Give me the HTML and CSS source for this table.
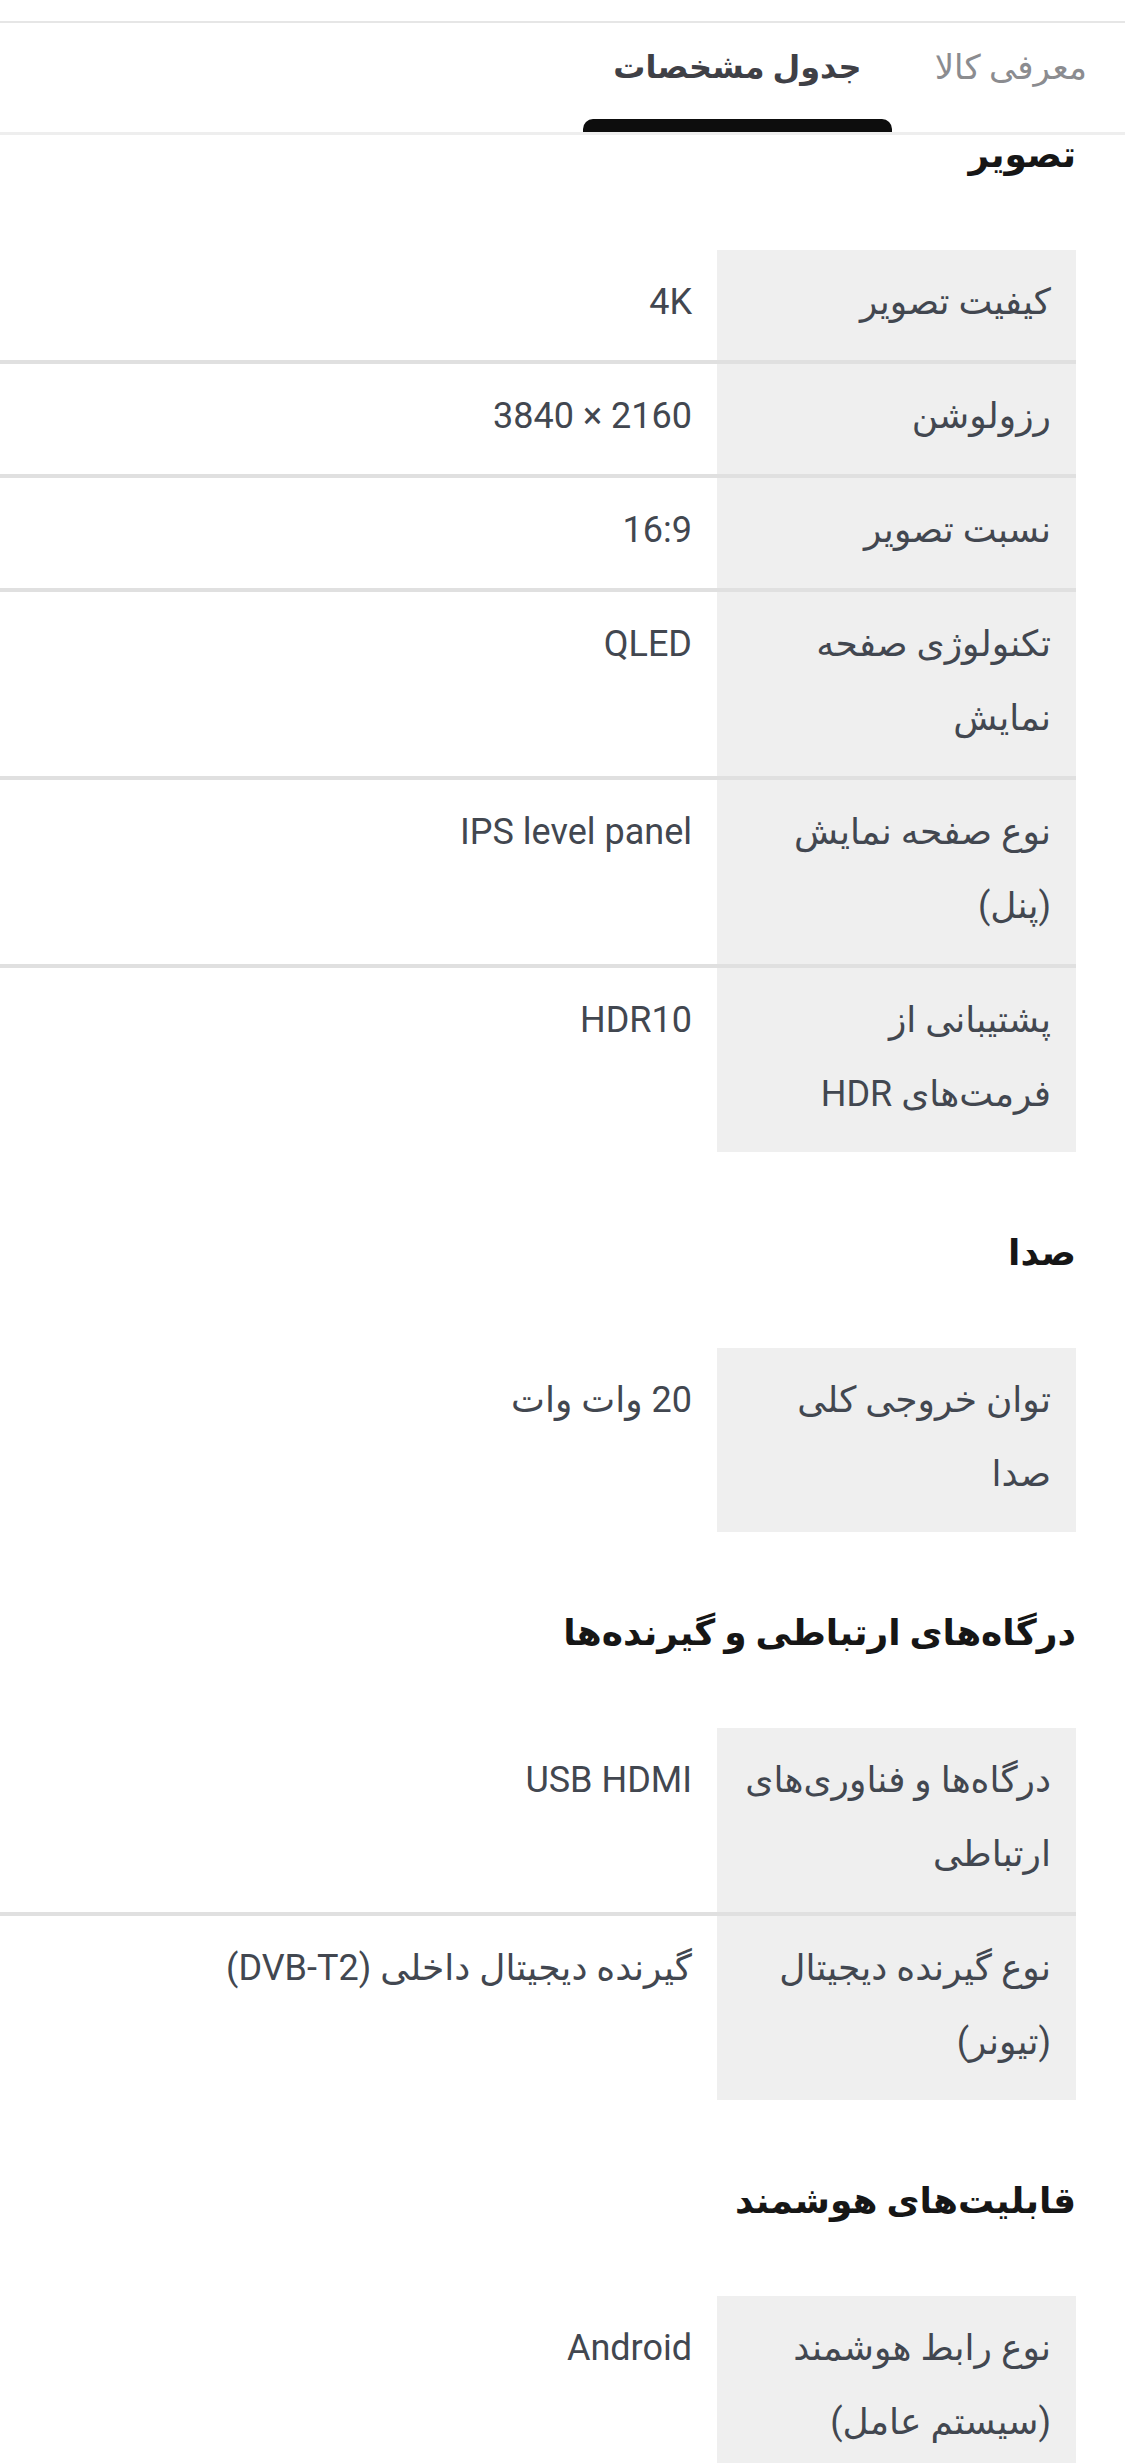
FILE: index.html
```html
<!DOCTYPE html>
<html lang="fa" dir="rtl">
<head>
<meta charset="utf-8">
<title>جدول مشخصات</title>
<link rel="stylesheet" href="styles.css">
</head>
<body>
<div class="page">
  <div class="top-rule"></div>
  <nav class="tabs">
    <div class="tab">معرفی کالا</div>
    <div class="tab tab-active">جدول مشخصات<span class="tab-indicator"></span></div>
  </nav>

  <section class="spec">
    <h2 class="spec-title">تصویر</h2>
    <div class="spec-table">
      <div class="spec-row"><div class="spec-label">کیفیت تصویر</div><div class="spec-value">4K</div></div>
      <div class="spec-row"><div class="spec-label">رزولوشن</div><div class="spec-value"><span class="ltr">3840 × 2160</span></div></div>
      <div class="spec-row"><div class="spec-label">نسبت تصویر</div><div class="spec-value">16:9</div></div>
      <div class="spec-row"><div class="spec-label">تکنولوژی صفحه نمایش</div><div class="spec-value">QLED</div></div>
      <div class="spec-row"><div class="spec-label">نوع صفحه نمایش (پنل)</div><div class="spec-value">IPS level panel</div></div>
      <div class="spec-row"><div class="spec-label">پشتیبانی از فرمت‌های HDR</div><div class="spec-value">HDR10</div></div>
    </div>
  </section>

  <section class="spec">
    <h2 class="spec-title">صدا</h2>
    <div class="spec-table">
      <div class="spec-row"><div class="spec-label">توان خروجی کلی صدا</div><div class="spec-value">20 وات وات</div></div>
    </div>
  </section>

  <section class="spec">
    <h2 class="spec-title">درگاه‌های ارتباطی و گیرنده‌ها</h2>
    <div class="spec-table">
      <div class="spec-row"><div class="spec-label">درگاه‌ها و فناوری‌های ارتباطی</div><div class="spec-value">USB HDMI</div></div>
      <div class="spec-row"><div class="spec-label">نوع گیرنده دیجیتال (تیونر)</div><div class="spec-value">گیرنده دیجیتال داخلی (DVB-T2)</div></div>
    </div>
  </section>

  <section class="spec">
    <h2 class="spec-title">قابلیت‌های هوشمند</h2>
    <div class="spec-table">
      <div class="spec-row"><div class="spec-label">نوع رابط هوشمند (سیستم عامل)</div><div class="spec-value">Android</div></div>
    </div>
  </section>
</div>
</body>
</html>
```

FILE: styles.css
```css
html, body {
  margin: 0;
  padding: 0;
  background: #ffffff;
}

body {
  direction: rtl;
  font-family: Roboto, "DejaVu Sans", sans-serif;
  overflow-x: hidden;
}

.page {
  width: 1125px;
}

.top-rule {
  height: 21px;
  border-bottom: 2px solid #e6e6e6;
}

.tabs {
  display: flex;
  gap: 12px;
  padding-right: 7px;
  height: 109px;
  border-bottom: 3px solid #eeeeee;
}

.tab {
  position: relative;
  padding: 19px 31px 0;
  font-size: 34px;
  line-height: 50px;
  color: #8b8c90;
  white-space: nowrap;
}

.tab-active {
  padding-left: 30px;
  padding-right: 30px;
  font-size: 32px;
  color: #3f4046;
  font-weight: bold;
}

.tab-indicator {
  position: absolute;
  left: 0;
  right: 0;
  bottom: 0;
  height: 13px;
  background: #0d0d0d;
  border-radius: 10px 10px 0 0;
}

.spec + .spec {
  margin-top: 76px;
}

.spec-title {
  margin: 0 49px 70px 0;
  font-size: 36px;
  line-height: 50px;
  font-weight: bold;
  color: #161616;
}

.spec:first-of-type .spec-title {
  margin-top: -5px;
}

.spec-table {
  margin-right: 49px;
}

.spec-row {
  display: grid;
  grid-template-columns: 359px 1fr;
}

.spec-row + .spec-row {
  border-top: 4px solid #e0e0e0;
}

.spec-label,
.spec-value {
  padding: 15px 25px 21px;
  font-size: 36px;
  line-height: 74px;
  color: #424750;
}

.spec-label {
  background: #efefef;
}

.ltr {
  direction: ltr;
  unicode-bidi: isolate;
}
```
